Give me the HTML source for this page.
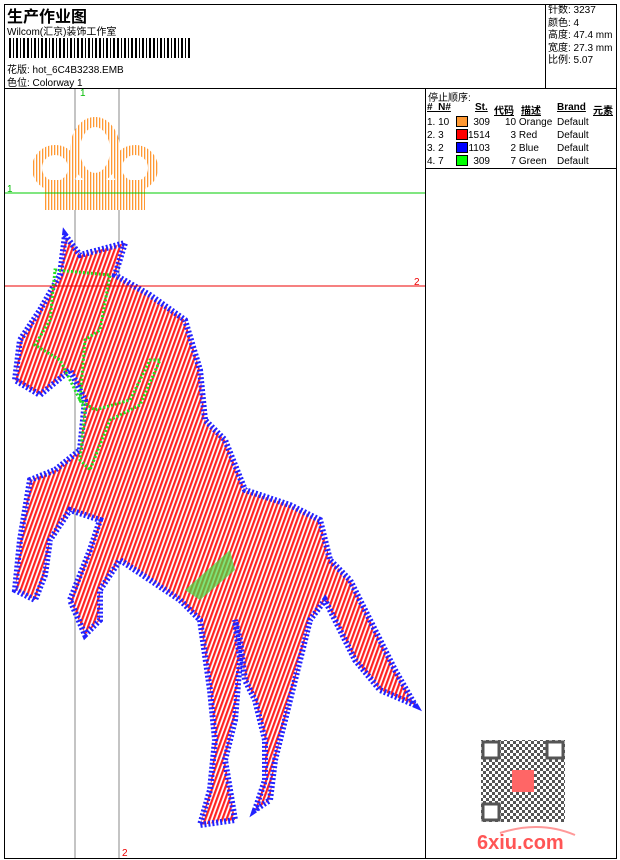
<!DOCTYPE html>
<html><head><meta charset="utf-8"><style>
body{margin:0;background:#fff;width:620px;height:860px;position:relative;overflow:hidden;font-family:"Liberation Sans","Noto Sans CJK SC",sans-serif;font-size:10px;color:#000}
.a{position:absolute;white-space:nowrap}
.ln{position:absolute;background:#000}
</style></head><body>
<div class="ln" style="left:4px;top:4px;width:613px;height:1px"></div>
<div class="ln" style="left:4px;top:858px;width:613px;height:1px"></div>
<div class="ln" style="left:4px;top:4px;width:1px;height:855px"></div>
<div class="ln" style="left:616px;top:4px;width:1px;height:855px"></div>
<div class="ln" style="left:4px;top:88px;width:613px;height:1px"></div>
<div class="ln" style="left:545px;top:4px;width:1px;height:84px"></div>
<div class="ln" style="left:425px;top:88px;width:1px;height:771px"></div>
<div class="ln" style="left:425px;top:168px;width:192px;height:1px"></div>
<div class="a" style="left:7px;top:3px;font-size:16px;font-weight:bold">生产作业图</div>
<div class="a" style="left:7px;top:23px">Wilcom(汇京)装饰工作室</div>
<svg class="a" style="left:9px;top:38px" width="185" height="20"><g fill="#000">
<rect x="0" width="2" height="20"/><rect x="4" width="1" height="20"/><rect x="7" width="2" height="20"/><rect x="11" width="1" height="20"/><rect x="14" width="2" height="20"/><rect x="18" width="2" height="20"/><rect x="22" width="1" height="20"/><rect x="25" width="2" height="20"/><rect x="29" width="1" height="20"/><rect x="32" width="2" height="20"/><rect x="36" width="2" height="20"/><rect x="40" width="1" height="20"/><rect x="43" width="2" height="20"/><rect x="47" width="1" height="20"/><rect x="50" width="2" height="20"/><rect x="54" width="2" height="20"/><rect x="58" width="1" height="20"/><rect x="61" width="2" height="20"/><rect x="65" width="1" height="20"/><rect x="68" width="2" height="20"/><rect x="72" width="2" height="20"/><rect x="76" width="1" height="20"/><rect x="79" width="2" height="20"/><rect x="83" width="1" height="20"/><rect x="86" width="2" height="20"/><rect x="90" width="2" height="20"/><rect x="94" width="1" height="20"/><rect x="97" width="2" height="20"/><rect x="101" width="1" height="20"/><rect x="104" width="2" height="20"/><rect x="108" width="2" height="20"/><rect x="112" width="1" height="20"/><rect x="115" width="2" height="20"/><rect x="119" width="1" height="20"/><rect x="122" width="2" height="20"/><rect x="126" width="2" height="20"/><rect x="130" width="1" height="20"/><rect x="133" width="2" height="20"/><rect x="137" width="1" height="20"/><rect x="140" width="2" height="20"/><rect x="144" width="2" height="20"/><rect x="148" width="1" height="20"/><rect x="151" width="2" height="20"/><rect x="155" width="1" height="20"/><rect x="158" width="2" height="20"/><rect x="162" width="1" height="20"/><rect x="165" width="2" height="20"/><rect x="169" width="1" height="20"/><rect x="172" width="2" height="20"/><rect x="176" width="1" height="20"/><rect x="179" width="2" height="20"/></g></svg>
<div class="a" style="left:7px;top:61px">花版: hot_6C4B3238.EMB</div>
<div class="a" style="left:7px;top:74px">色位: Colorway 1</div>
<div class="a" style="left:548px;top:5px;line-height:12.5px">针数: 3237<br>颜色: 4<br>高度: 47.4 mm<br>宽度: 27.3 mm<br>比例: 5.07</div>
<div class="a" style="left:428px;top:89px">停止顺序:</div>
<div class="a" style="left:427px;top:102px;font-weight:bold;text-decoration:underline">#&nbsp; N#</div>
<div class="a" style="left:475px;top:102px;font-weight:bold;text-decoration:underline">St.</div>
<div class="a" style="left:494px;top:102px;font-weight:bold;text-decoration:underline">代码</div>
<div class="a" style="left:521px;top:102px;font-weight:bold;text-decoration:underline">描述</div>
<div class="a" style="left:557px;top:102px;font-weight:bold;text-decoration:underline">Brand</div>
<div class="a" style="left:593px;top:102px;font-weight:bold;text-decoration:underline">元素</div>
<div class="a" style="left:427px;top:116px;line-height:13px">1. 10<br>2. 3<br>3. 2<br>4. 7</div>
<div class="a" style="left:456px;top:116px;width:10px;height:9px;background:#f93;border:1px solid #000"></div>
<div class="a" style="left:456px;top:129px;width:10px;height:9px;background:#f00;border:1px solid #000"></div>
<div class="a" style="left:456px;top:142px;width:10px;height:9px;background:#00f;border:1px solid #000"></div>
<div class="a" style="left:456px;top:155px;width:10px;height:9px;background:#0f0;border:1px solid #000"></div>
<div class="a" style="left:468px;top:116px;line-height:13px;text-align:right;width:22px">309<br>1514<br>1103<br>309</div>
<div class="a" style="left:505px;top:116px;line-height:13px">10 Orange<br>&nbsp;&nbsp;3 Red<br>&nbsp;&nbsp;2 Blue<br>&nbsp;&nbsp;7 Green</div>
<div class="a" style="left:557px;top:116px;line-height:13px">Default<br>Default<br>Default<br>Default</div>
<svg class="a" style="left:0;top:0" width="620" height="860">
<defs><pattern id="h" width="4" height="4" patternUnits="userSpaceOnUse" patternTransform="rotate(20)"><rect width="4" height="4" fill="#fff"/><rect width="2.2" height="4" fill="#f22"/></pattern>
<pattern id="v" width="3" height="3" patternUnits="userSpaceOnUse" patternTransform="rotate(0)"><rect width="3" height="3" fill="#fff"/><rect width="1.3" height="3" fill="#f93"/></pattern>
<pattern id="q" width="6" height="6" patternUnits="userSpaceOnUse"><rect width="6" height="6" fill="#fff"/><rect width="3" height="3" fill="#555"/><rect x="3" y="3" width="3" height="3" fill="#555"/></pattern></defs>
<line x1="75" y1="89" x2="75" y2="858" stroke="#888"/><line x1="119" y1="89" x2="119" y2="858" stroke="#888"/>
<g fill="none" stroke="url(#v)" stroke-width="10">
<ellipse cx="55" cy="168" rx="18" ry="18"/><ellipse cx="135" cy="168" rx="18" ry="18"/><ellipse cx="95" cy="150" rx="20" ry="28"/>
</g>
<rect x="45" y="180" width="100" height="30" fill="url(#v)"/>
<path d="M65 235 L80 255 L125 243 L115 275 L150 295 L185 320 L200 370 L205 420 L225 440 L245 490 L290 505 L320 520 L330 560 L350 580 L370 620 L395 670 L415 705 L380 690 L355 660 L335 620 L325 600 L310 620 L300 660 L290 700 L275 760 L270 800 L255 810 L265 780 L265 740 L255 700 L245 680 L240 640 L235 620 L240 660 L235 720 L225 760 L235 820 L200 825 L210 790 L215 740 L210 690 L200 620 L180 600 L150 580 L120 560 L100 590 L100 620 L85 635 L70 600 L90 550 L100 520 L70 510 L50 540 L45 575 L35 600 L15 590 L20 540 L30 480 L55 470 L80 450 L85 400 L70 370 L40 395 L15 380 L20 340 L40 310 L60 275Z" fill="url(#h)" stroke="#22f" stroke-width="6" stroke-dasharray="2 2"/>
<path d="M55 270 L110 275 L100 330 L85 340 L80 400 L95 410 L130 400 L150 360 L160 360 L140 405 L110 420 L90 470 L80 460 L85 410 L60 360 L35 345 L50 320Z" fill="none" stroke="#2d2" stroke-width="3" stroke-dasharray="2 2"/>
<path d="M185 590 L230 550 L235 570 L200 600Z" fill="#4d4" opacity=".7"/>
<line x1="5" y1="193" x2="425" y2="193" stroke="#0c0"/><line x1="5" y1="286" x2="425" y2="286" stroke="#e00"/>
<text x="80" y="96" fill="#0b0" font-size="10" font-family="Liberation Sans">1</text>
<text x="7" y="192" fill="#0b0" font-size="10" font-family="Liberation Sans">1</text>
<text x="414" y="285" fill="#e00" font-size="10" font-family="Liberation Sans">2</text>
<text x="122" y="856" fill="#e00" font-size="10" font-family="Liberation Sans">2</text>
<rect x="481" y="740" width="84" height="82" fill="url(#q)"/>
<rect x="483" y="742" width="16" height="16" fill="#fff" stroke="#555" stroke-width="3"/>
<rect x="547" y="742" width="16" height="16" fill="#fff" stroke="#555" stroke-width="3"/>
<rect x="483" y="804" width="16" height="16" fill="#fff" stroke="#555" stroke-width="3"/>
<rect x="512" y="770" width="22" height="22" fill="#f66"/>
<path d="M500 833 Q540 820 575 835" fill="none" stroke="#f99" stroke-width="2"/>
<text x="477" y="849" fill="#f55" font-size="20" font-weight="bold" font-family="Liberation Sans">6xiu.com</text>
</svg>
</body></html>
